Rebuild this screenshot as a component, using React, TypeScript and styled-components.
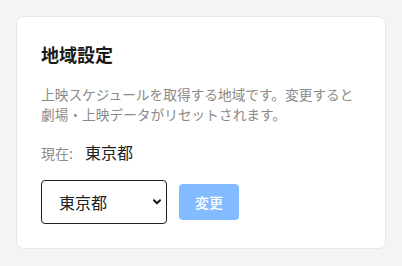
import React from "react";
import styled, { createGlobalStyle } from "styled-components";

const Global = createGlobalStyle`
  html, body { margin: 0; padding: 0; background: #f3f4f6; }
  body { font-family: "Noto Sans CJK JP", "Noto Sans", sans-serif; }
`;

const Page = styled.div`
  padding: 16px;
`;

const Card = styled.section`
  background: #ffffff;
  border: 1px solid #e5e7eb;
  border-radius: 8px;
  padding: 24px;
`;

const Title = styled.h2`
  margin: 0 0 16px;
  font-size: 18px;
  line-height: 27px;
  font-weight: 700;
  color: #1a1a1a;
`;

const Description = styled.p`
  margin: 0 0 16px;
  font-size: 13.7px;
  line-height: 20px;
  color: #8a8a8a;
`;

const CurrentRow = styled.div`
  display: flex;
  align-items: baseline;
  gap: 12px;
  margin-bottom: 15px;
  line-height: 24px;
`;

const Label = styled.span`
  font-size: 14px;
  color: #8e8e8e;
`;

const Value = styled.span`
  font-size: 16px;
  color: #222;
`;

const Controls = styled.div`
  display: flex;
  align-items: center;
  gap: 12px;
`;

const SelectWrap = styled.div`
  position: relative;
  width: 126px;
  height: 44px;
`;

const Select = styled.select`
  appearance: none;
  -webkit-appearance: none;
  width: 100%;
  height: 100%;
  border: 1px solid #1f1f1f;
  border-radius: 4px;
  background: #fff;
  padding: 0 24px 0 17px;
  font-family: inherit;
  font-size: 16px;
  color: #222;
  outline: none;
`;

const Chevron = styled.svg`
  position: absolute;
  right: 6px;
  top: 50%;
  width: 8px;
  height: 6px;
  margin-top: -3px;
  pointer-events: none;
`;

const Button = styled.button<{ $disabled?: boolean }>`
  width: 60px;
  height: 36px;
  border: none;
  border-radius: 4px;
  background: ${(p) => (p.$disabled ? "#82bbff" : "#3b82f6")};
  color: #fff;
  font-family: inherit;
  font-size: 14px;
  font-weight: 500;
`;

export default function App() {
  return (
    <>
      <Global />
      <Page>
        <Card>
          <Title>地域設定</Title>
          <Description>
            上映スケジュールを取得する地域です。変更すると劇場・上映データがリセットされます。
          </Description>
          <CurrentRow>
            <Label>現在:</Label>
            <Value>東京都</Value>
          </CurrentRow>
          <Controls>
            <SelectWrap>
              <Select defaultValue="東京都">
                <option value="東京都">東京都</option>
                <option value="大阪府">大阪府</option>
              </Select>
              <Chevron viewBox="0 0 8 6" aria-hidden="true">
                <path
                  d="M1 1.2 L4 4.2 L7 1.2"
                  fill="none"
                  stroke="#1a1a1a"
                  strokeWidth="2"
                  strokeLinecap="round"
                  strokeLinejoin="round"
                />
              </Chevron>
            </SelectWrap>
            <Button $disabled>変更</Button>
          </Controls>
        </Card>
      </Page>
    </>
  );
}
